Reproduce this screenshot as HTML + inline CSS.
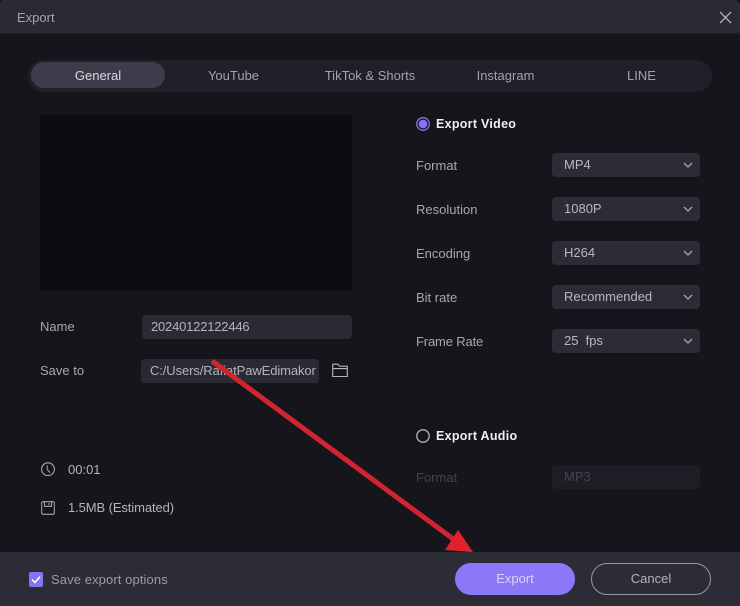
<!DOCTYPE html>
<html>
<head>
<meta charset="utf-8">
<style>
html,body{margin:0;padding:0;background:#15151b;}
#p{position:relative;width:740px;height:606px;overflow:hidden;background:#15151b;font-family:"Liberation Sans",sans-serif;font-size:13px;color:#b9b9bd;}
#p div{position:absolute;white-space:nowrap;}
.t{line-height:16px;}
.tab{top:68px;height:16px;line-height:16px;text-align:center;color:#a2a2a8;font-size:13px;}
.sel{left:552px;width:148px;height:24px;border-radius:4px;background:#2c2c37;color:#b8b8bc;line-height:23px;text-indent:12px;}
.lb{left:416px;color:#a8a8ac;line-height:16px;}
.in{border-radius:4px;background:#2a2a35;line-height:23px;color:#b4b4b8;}
svg{position:absolute;overflow:visible;}
</style>
</head>
<body>
<div id="p">
  <div style="left:0;top:0;width:740px;height:33px;background:#2a2a34;border-radius:4px 6px 0 0;"></div>
  <div style="left:0;top:33px;width:740px;height:2px;background:#1a1a20;"></div>
  <div class="t" style="left:17px;top:10px;color:#a6a6aa;font-size:13px;">Export</div>
  <svg style="left:0;top:0" width="740" height="40"><path d="M720 12L731 23M731 12L720 23" stroke="#b0b0b6" stroke-width="1.3" fill="none"/></svg>

  <div style="left:28px;top:60px;width:684px;height:32px;border-radius:16px;background:#20202a;"></div>
  <div style="left:31px;top:62px;width:134px;height:26px;border-radius:13px;background:#3d3c4b;"></div>
  <div class="tab" style="left:31px;width:134px;color:#d8d8dc;">General</div>
  <div class="tab" style="left:166px;width:135px;">YouTube</div>
  <div class="tab" style="left:302px;width:136px;">TikTok &amp; Shorts</div>
  <div class="tab" style="left:438px;width:135px;">Instagram</div>
  <div class="tab" style="left:574px;width:135px;">LINE</div>

  <div style="left:40px;top:115px;width:312px;height:176px;background:#0b0b10;"></div>

  <div class="t" style="left:40px;top:319px;color:#a8a8ac;">Name</div>
  <div class="in" style="left:142px;top:315px;width:210px;height:24px;text-indent:9px;letter-spacing:-.2px;">20240122122446</div>
  <div class="t" style="left:40px;top:363px;color:#a8a8ac;">Save to</div>
  <div class="in" style="left:141px;top:359px;width:178px;height:24px;text-indent:9px;overflow:hidden;letter-spacing:-.1px;">C:/Users/RafiatPawEdimakor</div>
  <svg style="left:332px;top:363px" width="16" height="15"><path d="M.7 13.5V1.2H6L7.6 3.2H15.3V13.5ZM.7 5.6H15.3" stroke="#b8b8bc" stroke-width="1.1" fill="none"/></svg>

  <svg style="left:41px;top:462px" width="15" height="15"><circle cx="7" cy="7.2" r="6.4" stroke="#a8a8ac" stroke-width="1.1" fill="none"/><path d="M6.2 3.4V7.4L9 10.5" stroke="#a8a8ac" stroke-width="1" fill="none"/></svg>
  <div class="t" style="left:68px;top:462px;color:#b4b4b8;">00:01</div>
  <svg style="left:41px;top:501px" width="15" height="15"><path d="M1.9.7H12.1A1.2 1.2 0 0 1 13.3 1.9V12.1A1.2 1.2 0 0 1 12.1 13.3H1.9A1.2 1.2 0 0 1 .7 12.1V1.9A1.2 1.2 0 0 1 1.9.7ZM3.5.7V5.3H10.5V.7M7.8 2V4" stroke="#a8a8ac" stroke-width="1.05" fill="none"/></svg>
  <div class="t" style="left:68px;top:500px;color:#b4b4b8;letter-spacing:-.1px;">1.5MB (Estimated)</div>

  <svg style="left:416px;top:117px" width="15" height="15"><circle cx="7" cy="7" r="6.3" fill="none" stroke="#8a78f0" stroke-width="1.3"/><circle cx="7" cy="7" r="4.4" fill="#8474f4"/></svg>
  <div class="t" style="left:436px;top:116px;color:#f0f0f2;font-weight:bold;font-size:12.5px;letter-spacing:.28px;">Export Video</div>

  <div class="lb" style="top:158px;">Format</div>
  <div class="sel" style="top:153px;">MP4</div>
  <div class="lb" style="top:202px;">Resolution</div>
  <div class="sel" style="top:197px;">1080P</div>
  <div class="lb" style="top:246px;">Encoding</div>
  <div class="sel" style="top:241px;">H264</div>
  <div class="lb" style="top:290px;">Bit rate</div>
  <div class="sel" style="top:285px;">Recommended</div>
  <div class="lb" style="top:334px;letter-spacing:-.15px;">Frame Rate</div>
  <div class="sel" style="top:329px;">25 &nbsp;fps</div>
  <svg style="left:0;top:0" width="740" height="500">
    <path d="M684 163L688 167L692 163M684 207L688 211L692 207M684 251L688 255L692 251M684 295L688 299L692 295M684 339L688 343L692 339" stroke="#a4a4aa" stroke-width="1.3" fill="none"/>
    <path d="M684 475L688 479L692 475" stroke="#3d3d46" stroke-width="1.3" fill="none"/>
  </svg>

  <svg style="left:416px;top:429px" width="15" height="15"><circle cx="7" cy="7" r="6.2" fill="none" stroke="#b4b4b8" stroke-width="1.3"/></svg>
  <div class="t" style="left:436px;top:428px;color:#f0f0f2;font-weight:bold;font-size:12.5px;letter-spacing:.28px;">Export Audio</div>
  <div class="lb" style="top:470px;color:#44444c;">Format</div>
  <div class="sel" style="top:465px;background:#1d1d25;color:#44444c;">MP3</div>

  <div style="left:0;top:552px;width:740px;height:54px;background:#2c2c36;"></div>
  <div style="left:29px;top:572px;width:14px;height:15px;border-radius:2px;background:#8474f0;"></div>
  <svg style="left:29px;top:572px" width="14" height="15"><path d="M3 7.6L6 10.5L11 4.6" stroke="#fff" stroke-width="1.6" fill="none"/></svg>
  <div class="t" style="left:51px;top:572px;color:#9c9ca2;letter-spacing:.1px;">Save export options</div>
  <div style="left:455px;top:563px;width:120px;height:32px;border-radius:16px;background:#8b78f8;color:#d8d4f4;text-align:center;line-height:32px;">Export</div>
  <div style="left:591px;top:563px;width:118px;height:30px;border-radius:16px;border:1px solid #96969c;color:#b4b4b8;text-align:center;line-height:30px;">Cancel</div>

  <svg style="left:0;top:0" width="740" height="606">
    <path d="M212 361L456 541" stroke="#d42330" stroke-width="5" fill="none"/>
    <path d="M473 552L445 550L458 530Z" fill="#e3212d"/>
  </svg>
</div>
</body>
</html>
